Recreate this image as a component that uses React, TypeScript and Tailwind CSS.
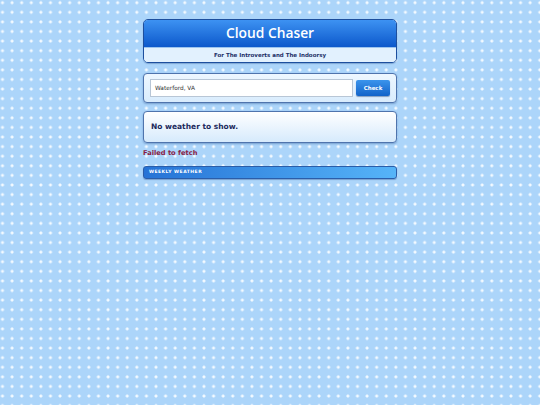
import React from "react";

export default function App() {
  return (
    <div
      className="min-h-[405px] w-full bg-[#acd5fa] [background-image:radial-gradient(circle,#f4faff_1.25px,transparent_1.75px)] [background-size:9.6px_9.6px] [background-position:-2.3px_-2.1px] pt-[19px]"
      style={{ fontFamily: '"DejaVu Sans", Verdana, sans-serif' }}
    >
      <div className="mx-auto flex w-[254px] flex-col">
        {/* Header */}
        <div className="overflow-hidden rounded-[5px] border border-[#1d4f9e] shadow-[0_1px_1px_rgba(40,80,140,0.35)]">
          <div
            className="flex h-[27px] items-center justify-center bg-[linear-gradient(#3d92f2,#0c58cb)] pb-[1px] text-[13.8px] font-semibold leading-none text-white"
            style={{ fontFamily: '"Open Sans", sans-serif' }}
          >
            Cloud Chaser
          </div>
          <div className="flex h-[15px] items-center justify-center border-t border-[#9cc4ee] bg-[#e2f1fe] text-[5.5px] font-bold text-[#1c2f66]">
            For The Introverts and The Indoorsy
          </div>
        </div>

        {/* Search */}
        <div className="mt-[10px] flex h-[30px] items-center gap-[3px] rounded-[4px] border border-[#4f74ad] bg-[linear-gradient(#eef7ff,#d9ecfd)] px-[6px] shadow-[0_1px_2px_rgba(40,80,140,0.4)]">
          <div className="flex h-[18px] flex-1 items-center border border-[#b8c6d6] bg-white px-[4px] text-[5.8px] text-[#333]">
            Waterford, VA
          </div>
          <button className="flex h-[16px] w-[34px] items-center justify-center rounded-[2px] bg-[linear-gradient(#3b94ec,#1263c9)] text-[5.5px] font-bold text-white shadow-[0_1px_1px_rgba(0,40,100,0.4)]">
            Check
          </button>
        </div>

        {/* Result */}
        <div className="mt-[8px] flex h-[32px] items-center rounded-[4px] border border-[#4f74ad] bg-[linear-gradient(#ffffff,#d6eafc)] px-[7px] text-[7.5px] font-bold text-[#1c2a5c] shadow-[0_1px_2px_rgba(40,80,140,0.4)]">
          No weather to show.
        </div>

        {/* Error */}
        <div className="mt-[5px] text-[6.7px] font-bold leading-[10px] text-[#8a1c44]">
          Failed to fetch
        </div>

        {/* Weekly bar */}
        <div className="mt-[8px] flex h-[13px] items-center rounded-[3px] border border-[#2b5da8] bg-[linear-gradient(90deg,#2673d6,#56b4f8)] px-[5px] text-[4.5px] font-bold tracking-[0.5px] text-white shadow-[0_1px_1px_rgba(40,80,140,0.4)]">
          WEEKLY WEATHER
        </div>
      </div>
    </div>
  );
}
